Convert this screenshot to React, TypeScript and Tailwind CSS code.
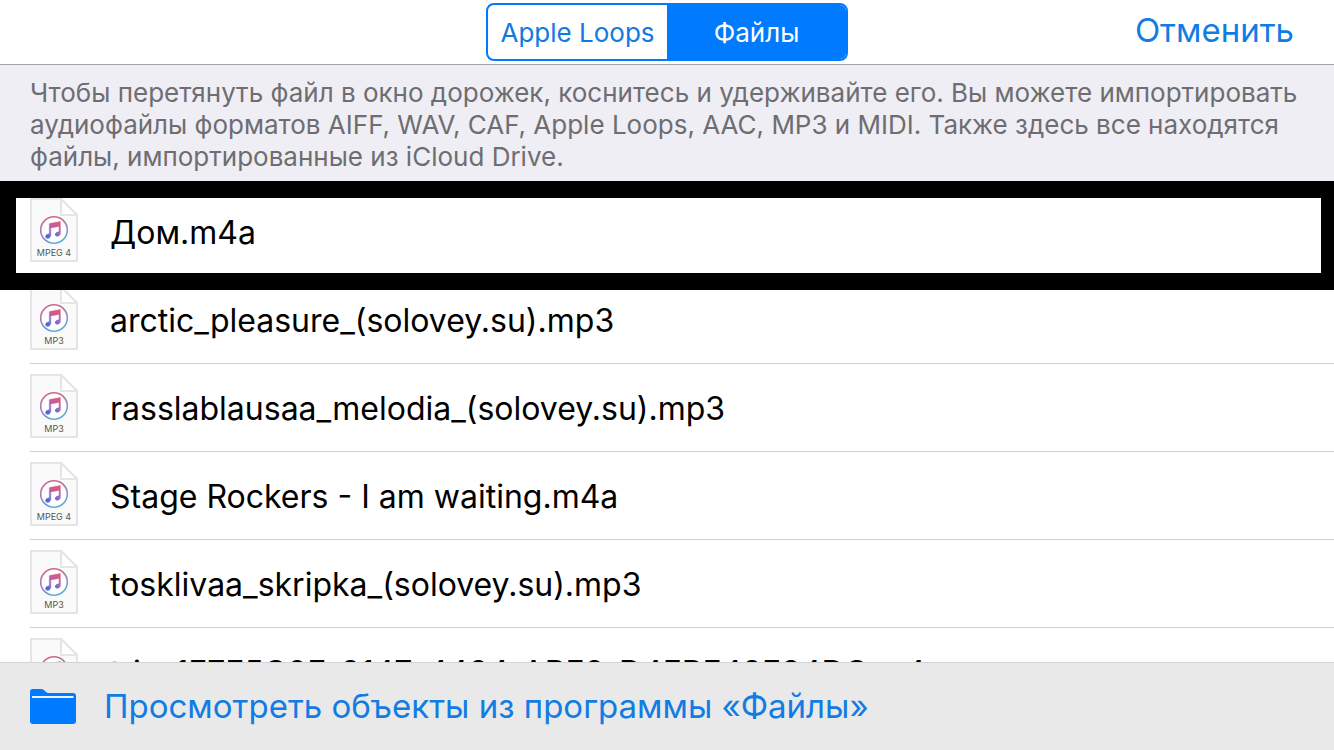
import React from "react";

const FILES = [
  { name: "Дом.m4a", kind: "MPEG 4", marked: true },
  { name: "arctic_pleasure_(solovey.su).mp3", kind: "MP3" },
  { name: "rasslablausaa_melodia_(solovey.su).mp3", kind: "MP3" },
  { name: "Stage Rockers - I am waiting.m4a", kind: "MPEG 4" },
  { name: "tosklivaa_skripka_(solovey.su).mp3", kind: "MP3" },
  { name: "trim.1F7F5C0F-9147-4484-ABF8-D4FBF49F84DC.m4a", kind: "MPEG 4" },
];

// Document page with a folded corner, the iTunes note and the format label
const FileIcon = ({ kind, id }: { kind: string; id: string }) => (
  <svg width="48" height="64" viewBox="0 0 48 64" className="shrink-0" aria-hidden="true">
    <defs>
      <linearGradient id={`${id}-ring`} x1="0.2" y1="0" x2="0.6" y2="1">
        <stop offset="0" stopColor="#d9637f" />
        <stop offset="0.5" stopColor="#9a78b8" />
        <stop offset="1" stopColor="#5aaedb" />
      </linearGradient>
      <linearGradient id={`${id}-note`} x1="0.7" y1="0" x2="0.4" y2="1">
        <stop offset="0" stopColor="#e8556b" />
        <stop offset="0.5" stopColor="#a866bd" />
        <stop offset="1" stopColor="#4a6be0" />
      </linearGradient>
    </defs>
    <path d="M1 1H31L47 17V63H1Z" fill="#fafafa" stroke="#e5e5e5" strokeWidth="2" />
    <path d="M31 1V17H47Z" fill="#fff" stroke="#e5e5e5" strokeWidth="2" strokeLinejoin="round" />
    <circle cx="24" cy="32" r="13.3" fill="#fff" stroke={`url(#${id}-ring)`} strokeWidth="1.5" />
    <path
      d="M19.3 25.6 30.4 23.4V34.8C30.4 37 29.2 38.1 27.6 38.3 24.6 38.7 24.2 34.9 27 34.2 28.3 33.9 29 33.8 29 32.6V28.4L20.8 30V37C20.8 39 19.6 40.2 18 40.4 15 40.7 14.6 37 17.4 36.3 18.7 36 19.3 35.9 19.3 34.8Z"
      fill={`url(#${id}-note)`}
      stroke={`url(#${id}-note)`}
      strokeWidth="0.4"
    />
    <text x="24" y="58" textAnchor="middle" fontSize="9" fill="#555" fontFamily="Inter, sans-serif">
      {kind}
    </text>
  </svg>
);

const FolderIcon = () => (
  <svg width="46" height="36" viewBox="0 0 46 36" className="shrink-0" aria-hidden="true">
    <path
      d="M2.5 0H11.5C14.5 0 15.5 4 18.5 4H43C45 4 46 5 46 7V32C46 34 45 35 43 35H3C1 35 0 34 0 32V3C0 1 1 0 2.5 0Z"
      fill="#007aff"
    />
    <path d="M2 8H43.5" stroke="#e9f3ff" strokeWidth="2" />
  </svg>
);

const FileRow = ({ file, id }: { file: (typeof FILES)[number]; id: string }) => (
  <li className="relative h-[88px] pl-[30px]">
    <button className="flex h-full w-full items-start gap-8 border-b border-[#d0d0d3] pt-[10px] text-left">
      <FileIcon kind={file.kind} id={id} />
      <span className="pt-3 text-[32px] leading-[46px] whitespace-nowrap">{file.name}</span>
    </button>
    {/* Heavy frame round the marked file */}
    {file.marked && (
      <div className="pointer-events-none absolute inset-x-0 -top-[7px] z-10 h-[109px] border-y-[17px] border-r-[13px] border-l-[16px] border-black" />
    )}
  </li>
);

const App = () => {
  return (
    <div className="flex h-screen flex-col overflow-hidden bg-white font-['Inter',sans-serif] text-black">
      <header className="grid h-[65px] shrink-0 grid-cols-[1fr_362px_1fr] items-start border-b border-[#a5a5ab] pt-[3px]">
        <nav className="col-start-2 grid h-[58px] grid-cols-2 overflow-hidden rounded-lg border-2 border-[#007aff] text-[26px]">
          <button className="text-[#1279e0]">Apple Loops</button>
          <button className="bg-[#007aff] text-white">Файлы</button>
        </nav>
        <button className="justify-self-end pr-10 text-[33px] leading-[54px] text-[#107ce4]">Отменить</button>
      </header>

      <p className="h-[116px] shrink-0 bg-[#efeef4] pt-3 pr-5 pl-[30px] text-[26px] leading-8 text-[#6d6d72]">
        Чтобы перетянуть файл в окно дорожек, коснитесь и удерживайте его. Вы можете импортировать
        аудиофайлы форматов AIFF, WAV, CAF, Apple Loops, AAC, MP3 и MIDI. Также здесь все находятся
        файлы, импортированные из iCloud Drive.
      </p>

      <main className="min-h-0 flex-1 overflow-hidden pt-[7px]">
        <ul>
          {FILES.map((file, i) => (
            <FileRow key={file.name} file={file} id={`file-${i}`} />
          ))}
        </ul>
      </main>

      <footer className="h-[88px] shrink-0 border-t border-[#d4d4d4] bg-[#e9e9e9]">
        <button className="flex h-full w-full items-center gap-7 px-[30px] text-left text-[33px] text-[#107ce4]">
          <FolderIcon />
          <span>Просмотреть объекты из программы «Файлы»</span>
        </button>
      </footer>
    </div>
  );
};

export default App;
